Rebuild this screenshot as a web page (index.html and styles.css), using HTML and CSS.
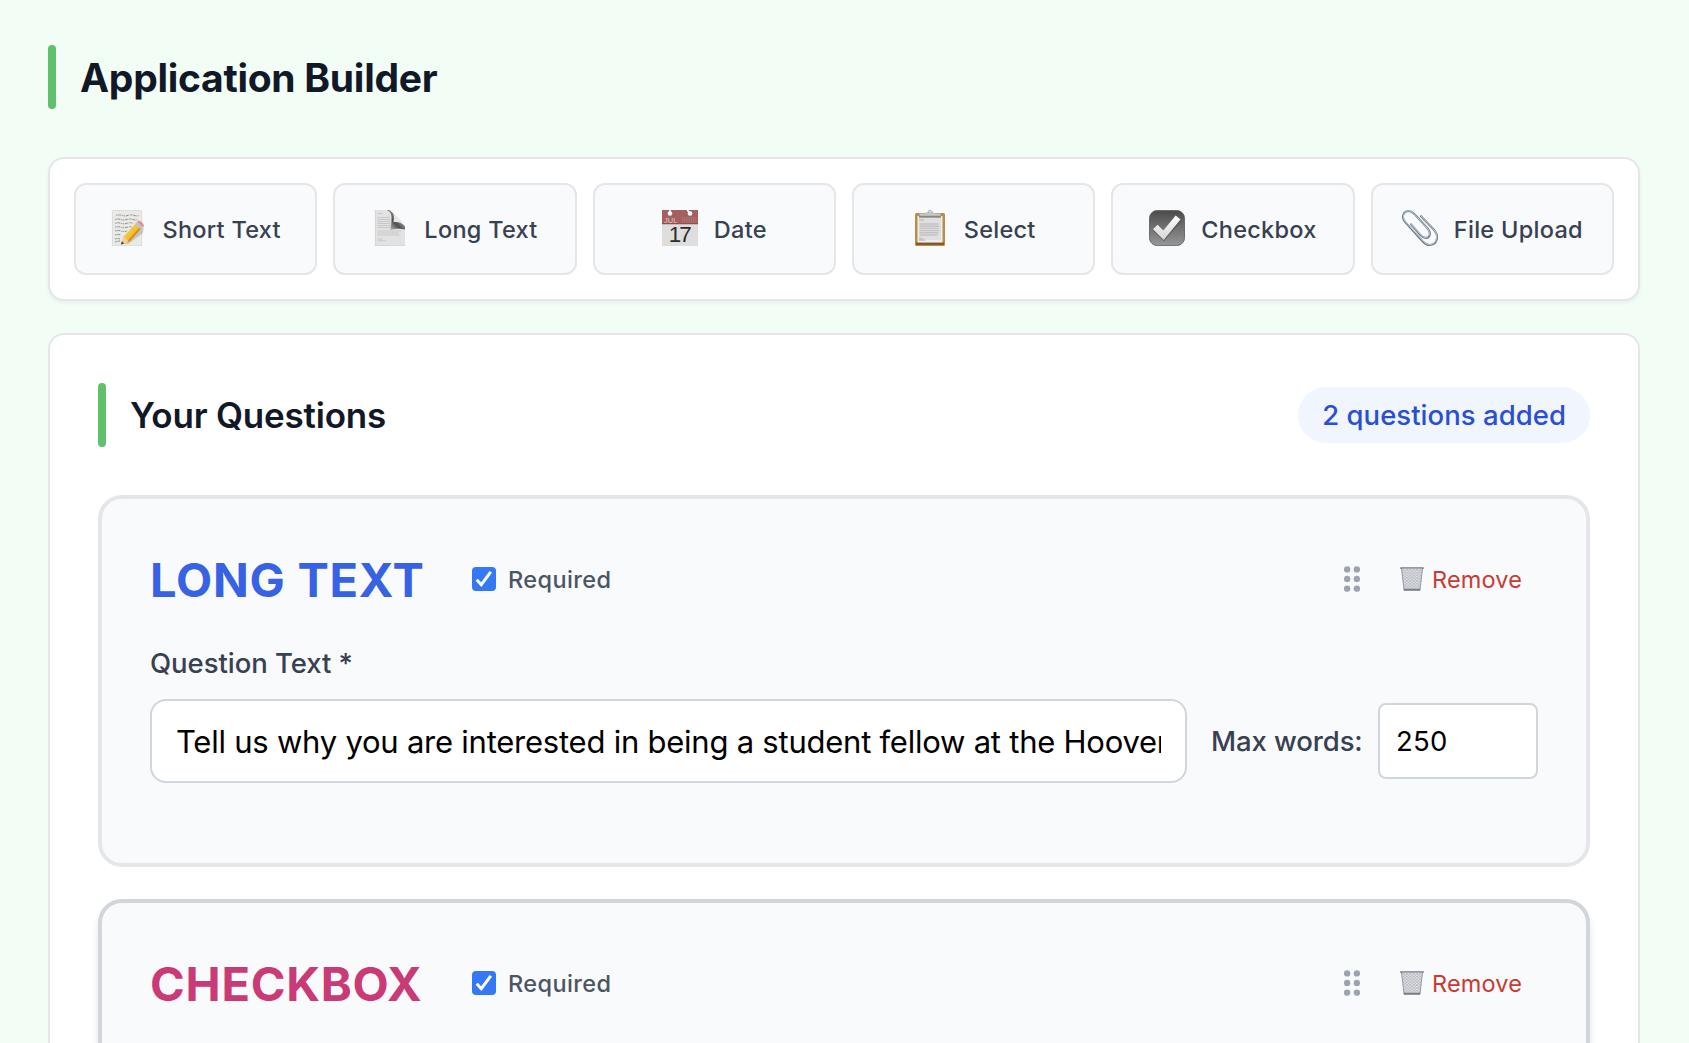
FILE: index.html
```html
<!DOCTYPE html>
<html lang="en">
<head>
<meta charset="utf-8">
<title>Application Builder</title>
<link rel="stylesheet" href="styles.css">
</head>
<body>
<main class="page">
  <header class="heading page-heading">
    <span class="accent"></span>
    <h1 class="page-title">Application Builder</h1>
  </header>

  <section class="toolbar">
    <button class="tool">
      <svg class="tool-icon" viewBox="0 0 36 36"><defs><linearGradient id="pencil" x1="0" y1="0" x2="1" y2="1"><stop offset="0" stop-color="#ffe45c"/><stop offset="1" stop-color="#e39a12"/></linearGradient></defs><path fill="#e9e9e7" stroke="#d3d3d1" stroke-width=".7" d="M2.400.400h29.200v35.200H2.400z"/><g fill="none" stroke="#77787b" stroke-width=".8" stroke-dasharray="1.600 .7 3 .9 .8 .5"><path d="M6 5.400q3-1 6 0t6 0 6 0 5 0M5 9.500q3-1 6 0t6 0 6 0 5 0M5 13.300q3-1 6 0t6 0 6 0M5 17.200q3-1 6 0t6 0 5 0M5 21q3-1 6 0t6 0M5 25q3-1 6 0M5 29q3-1 5 0M5 32q3-1 5-1"/></g><path fill="#8b8d92" opacity=".4" d="m14 34 17-14 3-5-1 8-15 11z"/><path fill="url(#pencil)" d="M13.700 26.500 26.500 12.500l5.600 5.200-13 14.400-8.200 2.300z"/><path fill="#c97c0c" opacity=".7" d="m17.300 31.200 13.500-15 1.300 1.500-13 14.400-2.500.800z"/><path fill="#f0cf9f" d="m13.700 26.500 5.400 5.600-8.200 2.300z"/><path fill="#3c3935" d="m11.900 31.300 2.200 2.200-3.200.900z"/><path fill="#b9c3cd" d="m25.200 13.900 2-2.200 5.700 5.200-2.100 2.300z"/><path fill="#e9868b" d="m27.200 11.700 1-.900c1.500-1 6.300 3 5.500 5.200l-.800.900z"/></svg>
      <span class="tool-label">Short Text</span>
    </button>
    <button class="tool">
      <svg class="tool-icon" viewBox="0 0 36 36"><defs><linearGradient id="curl" x1="1" y1="0" x2="0" y2="1"><stop offset="0" stop-color="#c9c9c9"/><stop offset=".45" stop-color="#777"/><stop offset=".6" stop-color="#4f4f4f"/><stop offset="1" stop-color="#dadada"/></linearGradient></defs><path fill="#e2e2e2" d="M3 0h15l15 16v20H3z"/><path fill="none" stroke="#d0d0d0" stroke-width=".8" d="M3.400 36V.400M3 35.600h30"/><g stroke="#c8c8c8" stroke-width="1"><path d="M5.500 3.500h5M5.500 7.500h12M5.500 9.500h13M5.500 11.500h13M5.500 13.500h13M5.500 15.500h13M5.500 17.500h14M5.500 21h23M5.500 23h21M5.500 25h22M5.500 29h5M5.500 30.700h8"/></g><path fill="url(#curl)" d="M15 0c5 2 5 7 4.300 13C19 17 18 19 18.500 20c5-2 11-1.500 14.500-.5v-3C30 12.500 26 11.500 21.500 12 23 5 21 1 17 0Z"/><path fill="#e7e7e7" d="M17 0c6 1 6 6 5 11.500 6-.700 9.500 1 11 4.500Q27 7 17 0Z"/></svg>
      <span class="tool-label">Long Text</span>
    </button>
    <button class="tool">
      <svg class="tool-icon" viewBox="0 0 36 36"><path fill="#dedede" d="M0 0h36v36H0z"/><path fill="#a3605f" d="M0 0h36v14H0z"/><path fill="#8d5050" d="M0 13h36v1.200H0z"/><g fill="#fff"><circle cx="8" cy="3.500" r="2.300"/><circle cx="28" cy="3.500" r="2.300"/><path d="M7.300 0h1.400v3H7.300zM24.500 0h2l2 3-1.500 1z"/></g><text class="cal-month" x="2" y="12.600">JUL</text><path stroke="#bd8785" stroke-width=".9" stroke-dasharray="1.200 1" d="M20 8h15M20 10h15M20 12h15"/><text class="cal-day" x="17.200" y="32.300" text-anchor="middle">17</text></svg>
      <span class="tool-label">Date</span>
    </button>
    <button class="tool">
      <svg class="tool-icon" viewBox="0 0 36 36"><path fill="#b98d4b" d="M4.500 3h27q1.500 0 1.500 1.500v30q0 1.500-1.500 1.500h-27Q3 36 3 34.500v-30Q3 3 4.500 3z"/><path fill="#7b5428" d="M4 32.500h28v2.300H4z"/><path fill="#ededed" d="M5.500 6h25v26.500h-25z"/><path fill="#d5d5d5" d="M7 8h22v22H7z" opacity=".6"/><g stroke="#c3c3c3" stroke-width="1.400"><path d="M7 10h5M7.500 14h19M7.500 16.200h20M7.500 18.400h19M7.500 20.600h20M7.500 22.800h19M7.500 25h18M7 28.500h4M7 30h6"/></g><path fill="#8a847c" d="M7 5.500h22v2.200H7z"/><path fill="#c5c8cb" d="M7.500 3.500H13l2-1.500h6l2 1.500h5.500v2.300h-21z"/><path fill="none" stroke="#a6b4c4" stroke-width="1.100" d="M15.500 3.500C16.500 3 15.500.600 18 .600s1.500 2.400 2.500 2.900"/></svg>
      <span class="tool-label">Select</span>
    </button>
    <button class="tool">
      <svg class="tool-icon" viewBox="0 0 36 36"><defs><linearGradient id="box" x1="0" y1="0" x2="0" y2="1"><stop offset="0" stop-color="#4b4b4b"/><stop offset="1" stop-color="#979797"/></linearGradient><linearGradient id="tick" x1="0" y1="0" x2="0" y2="1"><stop offset="0" stop-color="#fff"/><stop offset="1" stop-color="#d3d3d3"/></linearGradient></defs><rect x=".4" y=".4" width="35.200" height="35.200" rx="8" fill="url(#box)" stroke="#555" stroke-width=".8"/><path fill="#3e3e3e" opacity=".55" d="m3.800 20.400 4.800-4.400 5.800 6L26.800 6.700l5.200 4.200L15 31.300Z"/><path fill="url(#tick)" d="m4 19.300 4.600-4.500 5.700 5.800L26.700 5.500l4.800 3.900L14.700 30Z"/></svg>
      <span class="tool-label">Checkbox</span>
    </button>
    <button class="tool">
      <svg class="tool-icon" viewBox="0 0 36 36"><g fill="none" stroke-linecap="round" stroke-linejoin="round"><path stroke="#707985" stroke-width="2" d="M18.800 6 32.400 20.300C37.500 26 35 35 27.500 35c-3 0-4.800-1.500-6.500-3.300L3 11.800C-1.300 6.500 2 1 6.800 1c2.700 0 4.200 1.300 6 3.300l13 14.400c4 4.800 1.500 9.300-2 9.300-2.500 0-4-1.500-5.500-3.200L9 14.300"/><path stroke="#c3d2e3" stroke-width=".9" d="M18.600 5.600 32.200 20c5 5.500 2.300 14.500-4.800 14.500-2.800 0-4.500-1.500-6.100-3.200L3.200 11.400C-.800 6.500 2.300 1 6.800.900c2.500 0 4 1.300 5.700 3.200l13 14.400c3.700 4.500 1.500 9-1.900 9-2.300 0-3.700-1.400-5.100-3L8.800 14"/></g></svg>
      <span class="tool-label">File Upload</span>
    </button>
  </section>

  <section class="questions">
    <div class="questions-head">
      <div class="heading">
        <span class="accent"></span>
        <h2 class="section-title">Your Questions</h2>
      </div>
      <span class="count">2 questions added</span>
    </div>

    <article class="question">
      <div class="question-head">
        <h3 class="kind kind-long">LONG TEXT</h3>
        <label class="required"><svg class="check" viewBox="0 0 24 24"><rect width="24" height="24" rx="4" fill="#3478f6"/><path fill="none" stroke="#fff" stroke-width="3" d="m4.700 12.700 4.600 5L18.800 4.900"/></svg><span>Required</span></label>
        <svg class="grip" viewBox="0 0 16 26"><g fill="#9ca3af"><circle cx="3.100" cy="3.400" r="3.200"/><circle cx="12.900" cy="3.400" r="3.200"/><circle cx="3.100" cy="13" r="3.200"/><circle cx="12.900" cy="13" r="3.200"/><circle cx="3.100" cy="22.600" r="3.200"/><circle cx="12.900" cy="22.600" r="3.200"/></g></svg>
        <button class="remove"><svg class="trash" viewBox="0 0 24 24"><defs><pattern id="mesh" width="3.400" height="2.800" patternUnits="userSpaceOnUse"><path fill="#eceef0" d="M0 0h3.400v2.800H0z"/><path fill="none" stroke="#959aa3" stroke-width=".6" d="m0 0 3.400 2.800M3.400 0 0 2.800"/></pattern></defs><path fill="url(#mesh)" stroke="#8b909a" stroke-width=".9" d="m1.500 1.500 2.500 21h16l2.500-21z"/><path fill="#747b86" d="M.300.300h23.400v1.800H.300zM3.600 21.800h16.800l-.200 1.900H3.800z"/><path fill="#d7dade" d="M1.800 1h20.400v.500H1.800z"/></svg><span>Remove</span></button>
      </div>
      <label class="field-label">Question Text *</label>
      <div class="field-row">
        <input class="text-input" type="text" value="Tell us why you are interested in being a student fellow at the Hoover Institution?">
        <label class="words"><span class="words-text">Max words:</span><input class="number-input" type="text" value="250"></label>
      </div>
    </article>

    <article class="question question-active">
      <div class="question-head">
        <h3 class="kind kind-check">CHECKBOX</h3>
        <label class="required"><svg class="check" viewBox="0 0 24 24"><rect width="24" height="24" rx="4" fill="#3478f6"/><path fill="none" stroke="#fff" stroke-width="3" d="m4.700 12.700 4.600 5L18.800 4.900"/></svg><span>Required</span></label>
        <svg class="grip" viewBox="0 0 16 26"><g fill="#9ca3af"><circle cx="3.100" cy="3.400" r="3.200"/><circle cx="12.900" cy="3.400" r="3.200"/><circle cx="3.100" cy="13" r="3.200"/><circle cx="12.900" cy="13" r="3.200"/><circle cx="3.100" cy="22.600" r="3.200"/><circle cx="12.900" cy="22.600" r="3.200"/></g></svg>
        <button class="remove"><svg class="trash" viewBox="0 0 24 24"><path fill="url(#mesh)" stroke="#8b909a" stroke-width=".9" d="m1.500 1.500 2.500 21h16l2.500-21z"/><path fill="#747b86" d="M.300.300h23.400v1.800H.300zM3.600 21.800h16.800l-.200 1.900H3.800z"/><path fill="#d7dade" d="M1.800 1h20.400v.500H1.800z"/></svg><span>Remove</span></button>
      </div>
    </article>
  </section>
</main>
</body>
</html>
```
FILE: styles.css
```css
* { box-sizing: border-box; }
body {
  margin: 0;
  background: #f2fdf5;
  font-family: Inter, "Noto Sans", sans-serif;
  color: #111827;
}
h1, h2, h3 { margin: 0; }
button, input { font-family: inherit; }
.page { height: 100vh; overflow: hidden; padding: 45px 49px 0 48px; }
.heading { display: flex; align-items: center; gap: 24px; }
.accent { width: 8px; height: 64px; border-radius: 4px; background: #5fc16c; }
.page-heading { margin-bottom: 48px; }
.page-title { padding-top: 2px; font-size: 39px; line-height: 48px; font-weight: 700; letter-spacing: -0.28px; }
.toolbar {
  display: grid;
  grid-template-columns: repeat(6, minmax(0, 1fr));
  gap: 16px;
  padding: 24px;
  background: #fff;
  border: 2px solid #e4e6ea;
  border-radius: 16px;
  box-shadow: 0 2px 4px rgba(0, 0, 0, 0.05);
}
.tool {
  display: flex;
  align-items: center;
  justify-content: center;
  gap: 16px;
  height: 92px;
  padding: 0;
  background: #f9fafc;
  border: 2px solid #e4e6ea;
  border-radius: 12px;
  color: #374151;
  font-size: 23.5px;
  font-weight: 500;
  letter-spacing: 0.28px;
  white-space: nowrap;
}
.tool-icon { width: 36px; height: 36px; flex: none; display: block; margin-top: -2px; }
.cal-month { font-family: "Liberation Sans", sans-serif; font-size: 7.5px; font-weight: 400; letter-spacing: 0; fill: #e0c9c8; }
.cal-day { font-family: "Liberation Sans", sans-serif; font-size: 22.5px; font-weight: 400; letter-spacing: -2px; fill: #2c2c2c; }
.questions {
  margin-top: 32px;
  height: 900px;
  padding: 48px;
  background: #fff;
  border: 2px solid #e4e6ea;
  border-radius: 16px;
}
.questions-head { display: flex; align-items: center; justify-content: space-between; margin-bottom: 48px; }
.section-title { font-size: 35px; line-height: 48px; font-weight: 600; letter-spacing: -0.2px; }
.count {
  padding: 8px 24px;
  border-radius: 28px;
  background: #f0f5fe;
  color: #2a4fd3;
  font-size: 27.5px;
  line-height: 40px;
  font-weight: 500;
  letter-spacing: 0.04px;
}
.question {
  height: 372px;
  padding: 48px;
  background: #f9fafc;
  border: 4px solid #e4e6ea;
  border-radius: 24px;
}
.question-active { margin-top: 32px; border-color: #d1d5dc; box-shadow: 0 8px 12px -2px rgba(0, 0, 0, 0.1), 0 4px 8px -2px rgba(0, 0, 0, 0.06); }
.question-head { display: flex; align-items: center; height: 64px; }
.kind { width: 322px; padding-top: 2px; font-size: 47px; line-height: 64px; font-weight: 700; letter-spacing: 0.75px; white-space: nowrap; }
.kind-long { color: #3762e3; }
.kind-check { color: #c93b76; }
.required { display: flex; align-items: center; gap: 12px; color: #4b5563; font-size: 23.5px; font-weight: 500; letter-spacing: 0.4px; }
.check { width: 24px; height: 24px; display: block; }
.grip { width: 16px; height: 26px; margin-left: auto; }
.remove {
  display: flex; align-items: center; gap: 8px; width: 138px; margin-left: 40px;
  padding: 0; border: 0; background: none; color: #c93a33; font-size: 23.5px; letter-spacing: 0.15px;
}
.trash { width: 24px; height: 24px; flex: none; }
.field-label { display: block; margin: 32px 0 16px; font-size: 27.5px; line-height: 40px; font-weight: 500; letter-spacing: -0.05px; color: #374151; }
.field-row { display: flex; align-items: center; gap: 24px; }
.text-input {
  flex: 1; min-width: 0; height: 84px; padding: 1px 24px 0; border: 2px solid #d1d5dc;
  border-radius: 16px; background: #fff; color: #000; font-size: 31px; letter-spacing: -0.235px;
}
.words { display: flex; align-items: center; justify-content: space-between; width: 327px; color: #374151; font-size: 27.5px; font-weight: 500; letter-spacing: -0.1px; }
.number-input {
  width: 160px; height: 76px; padding: 0 16px; border: 2px solid #d1d5dc;
  border-radius: 8px; background: #fff; color: #000; font-size: 27.5px; letter-spacing: 0.2px;
}
```
